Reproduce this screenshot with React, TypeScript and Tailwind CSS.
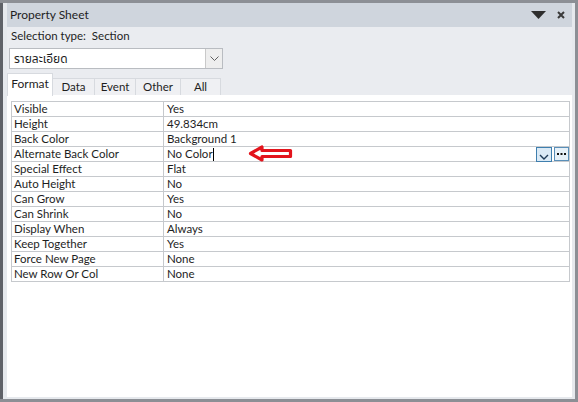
import React from "react";

const rows: [string, string][] = [
  ["Visible", "Yes"],
  ["Height", "49.834cm"],
  ["Back Color", "Background 1"],
  ["Alternate Back Color", "No Color"],
  ["Special Effect", "Flat"],
  ["Auto Height", "No"],
  ["Can Grow", "Yes"],
  ["Can Shrink", "No"],
  ["Display When", "Always"],
  ["Keep Together", "Yes"],
  ["Force New Page", "None"],
  ["New Row Or Col", "None"],
];

const font = { fontFamily: '"Segoe UI", Lato, "Noto Sans", "Noto Sans Thai", "DejaVu Sans", sans-serif' };

export default function App() {
  return (
    <div
      className="w-[578px] h-[402px] bg-[#8c8f95] pt-[3px] pb-[3px] pr-[3px] flex overflow-hidden text-[#1e1e1e]"
      style={font}
    >
      <div className="w-[3px] bg-[#5f6268]" />
      <div className="flex-1 flex flex-col bg-[#e6e9ed] pl-[4px] pr-[3px] pb-[2px]">
        {/* title bar */}
        <div className="h-[24px] bg-[#cfd5dd] flex items-center pl-[3px] pr-[6px]">
          <span className="text-[12px] leading-none">Property Sheet</span>
          <div className="flex-1" />
          <svg width="15" height="8" viewBox="0 0 15 8" className="mr-[11px]">
            <polygon points="0,0 15,0 7.5,8" fill="#2e2e2e" />
          </svg>
          <svg width="8" height="8" viewBox="0 0 8 8" className="mr-[1px]">
            <path d="M1 1 L7 7 M7 1 L1 7" stroke="#3a3a3a" strokeWidth="2" />
          </svg>
        </div>
        <div className="bg-[#eaecf0] flex-1 flex flex-col">
          <div className="h-[17px] flex items-center pl-[4px] text-[11.5px] leading-none">
            Selection type:&nbsp; Section
          </div>
          {/* dropdown */}
          <div className="mt-[4px] ml-[2px] w-[214px] h-[21px] bg-white border border-[#b9bcc1] flex items-center">
            <span className="pl-[4px] text-[12px] leading-none flex-1">รายละเอียด</span>
            <div className="w-[17px] h-[19px] bg-[#eeeeee] border-l border-[#c9c9c9] flex items-center justify-center">
              <svg width="9" height="5" viewBox="0 0 9 5">
                <path d="M0.5 0.5 L4.5 4.5 L8.5 0.5" stroke="#606060" strokeWidth="1" fill="none" />
              </svg>
            </div>
          </div>
          {/* tabs */}
          <div className="mt-[4px] h-[22px] flex items-end">
            <div className="w-[46px] h-[23px] bg-white border-t border-l border-r border-[#d7dadf] flex items-center justify-center text-[12px] leading-none pb-[2px] relative top-[1px]">
              Format
            </div>
            {[
              ["Data", "w-[42px]"],
              ["Event", "w-[41px]"],
              ["Other", "w-[45px]"],
              ["All", "w-[40px]"],
            ].map(([t, w]) => (
              <div
                key={t}
                className={`${w} h-[17px] bg-[#eff0f3] border-t border-r border-[#d7dadf] flex items-center justify-center text-[11.5px] leading-none`}
              >
                {t}
              </div>
            ))}
          </div>
          {/* content */}
          <div className="flex-1 bg-white pt-[6px] pl-[4px] pr-[2px]">
            <div className="border-t border-l border-r border-[#c6c9cd]">
              {rows.map(([k, v]) => (
                <div key={k} className="h-[15px] flex border-b border-[#c6c9cd] text-[11.5px] leading-none">
                  <div className="w-[152px] border-r border-[#c6c9cd] pl-[2px] flex items-center">{k}</div>
                  <div className="flex-1 pl-[3px] flex items-center relative">
                    {v}
                    {k === "Alternate Back Color" && (
                      <>
                        <div className="w-[1px] h-[13px] bg-black" />
                        <svg
                          width="45"
                          height="17"
                          viewBox="0 0 45 17"
                          className="absolute left-[84px] top-[-2px]"
                        >
                          <polygon
                            points="2.5,8.5 14,2 14,5.5 42.5,5.5 42.5,11.5 14,11.5 14,15"
                            fill="white"
                            stroke="#e3141c"
                            strokeWidth="3.2"
                            strokeLinejoin="round"
                          />
                        </svg>
                        <div className="absolute right-[0px] top-[0px] flex gap-[2px]">
                          <div className="w-[16px] h-[15px] bg-[#dbeaf6] border border-[#3f7fae] flex items-end justify-center pb-[1px]">
                            <svg width="10" height="6" viewBox="0 0 10 6">
                              <path d="M1 1 L5 5 L9 1" stroke="#1f3b57" strokeWidth="1.4" fill="none" />
                            </svg>
                          </div>
                          <div className="w-[15px] h-[14px] bg-[#e6f0f8] border border-[#5a8fb8] flex items-center justify-center">
                            <svg width="9" height="3" viewBox="0 0 9 3">
                              <rect x="0" y="0" width="2" height="2" fill="#111" />
                              <rect x="3.5" y="0" width="2" height="2" fill="#111" />
                              <rect x="7" y="0" width="2" height="2" fill="#111" />
                            </svg>
                          </div>
                        </div>
                      </>
                    )}
                  </div>
                </div>
              ))}
            </div>
          </div>
        </div>
      </div>
    </div>
  );
}
